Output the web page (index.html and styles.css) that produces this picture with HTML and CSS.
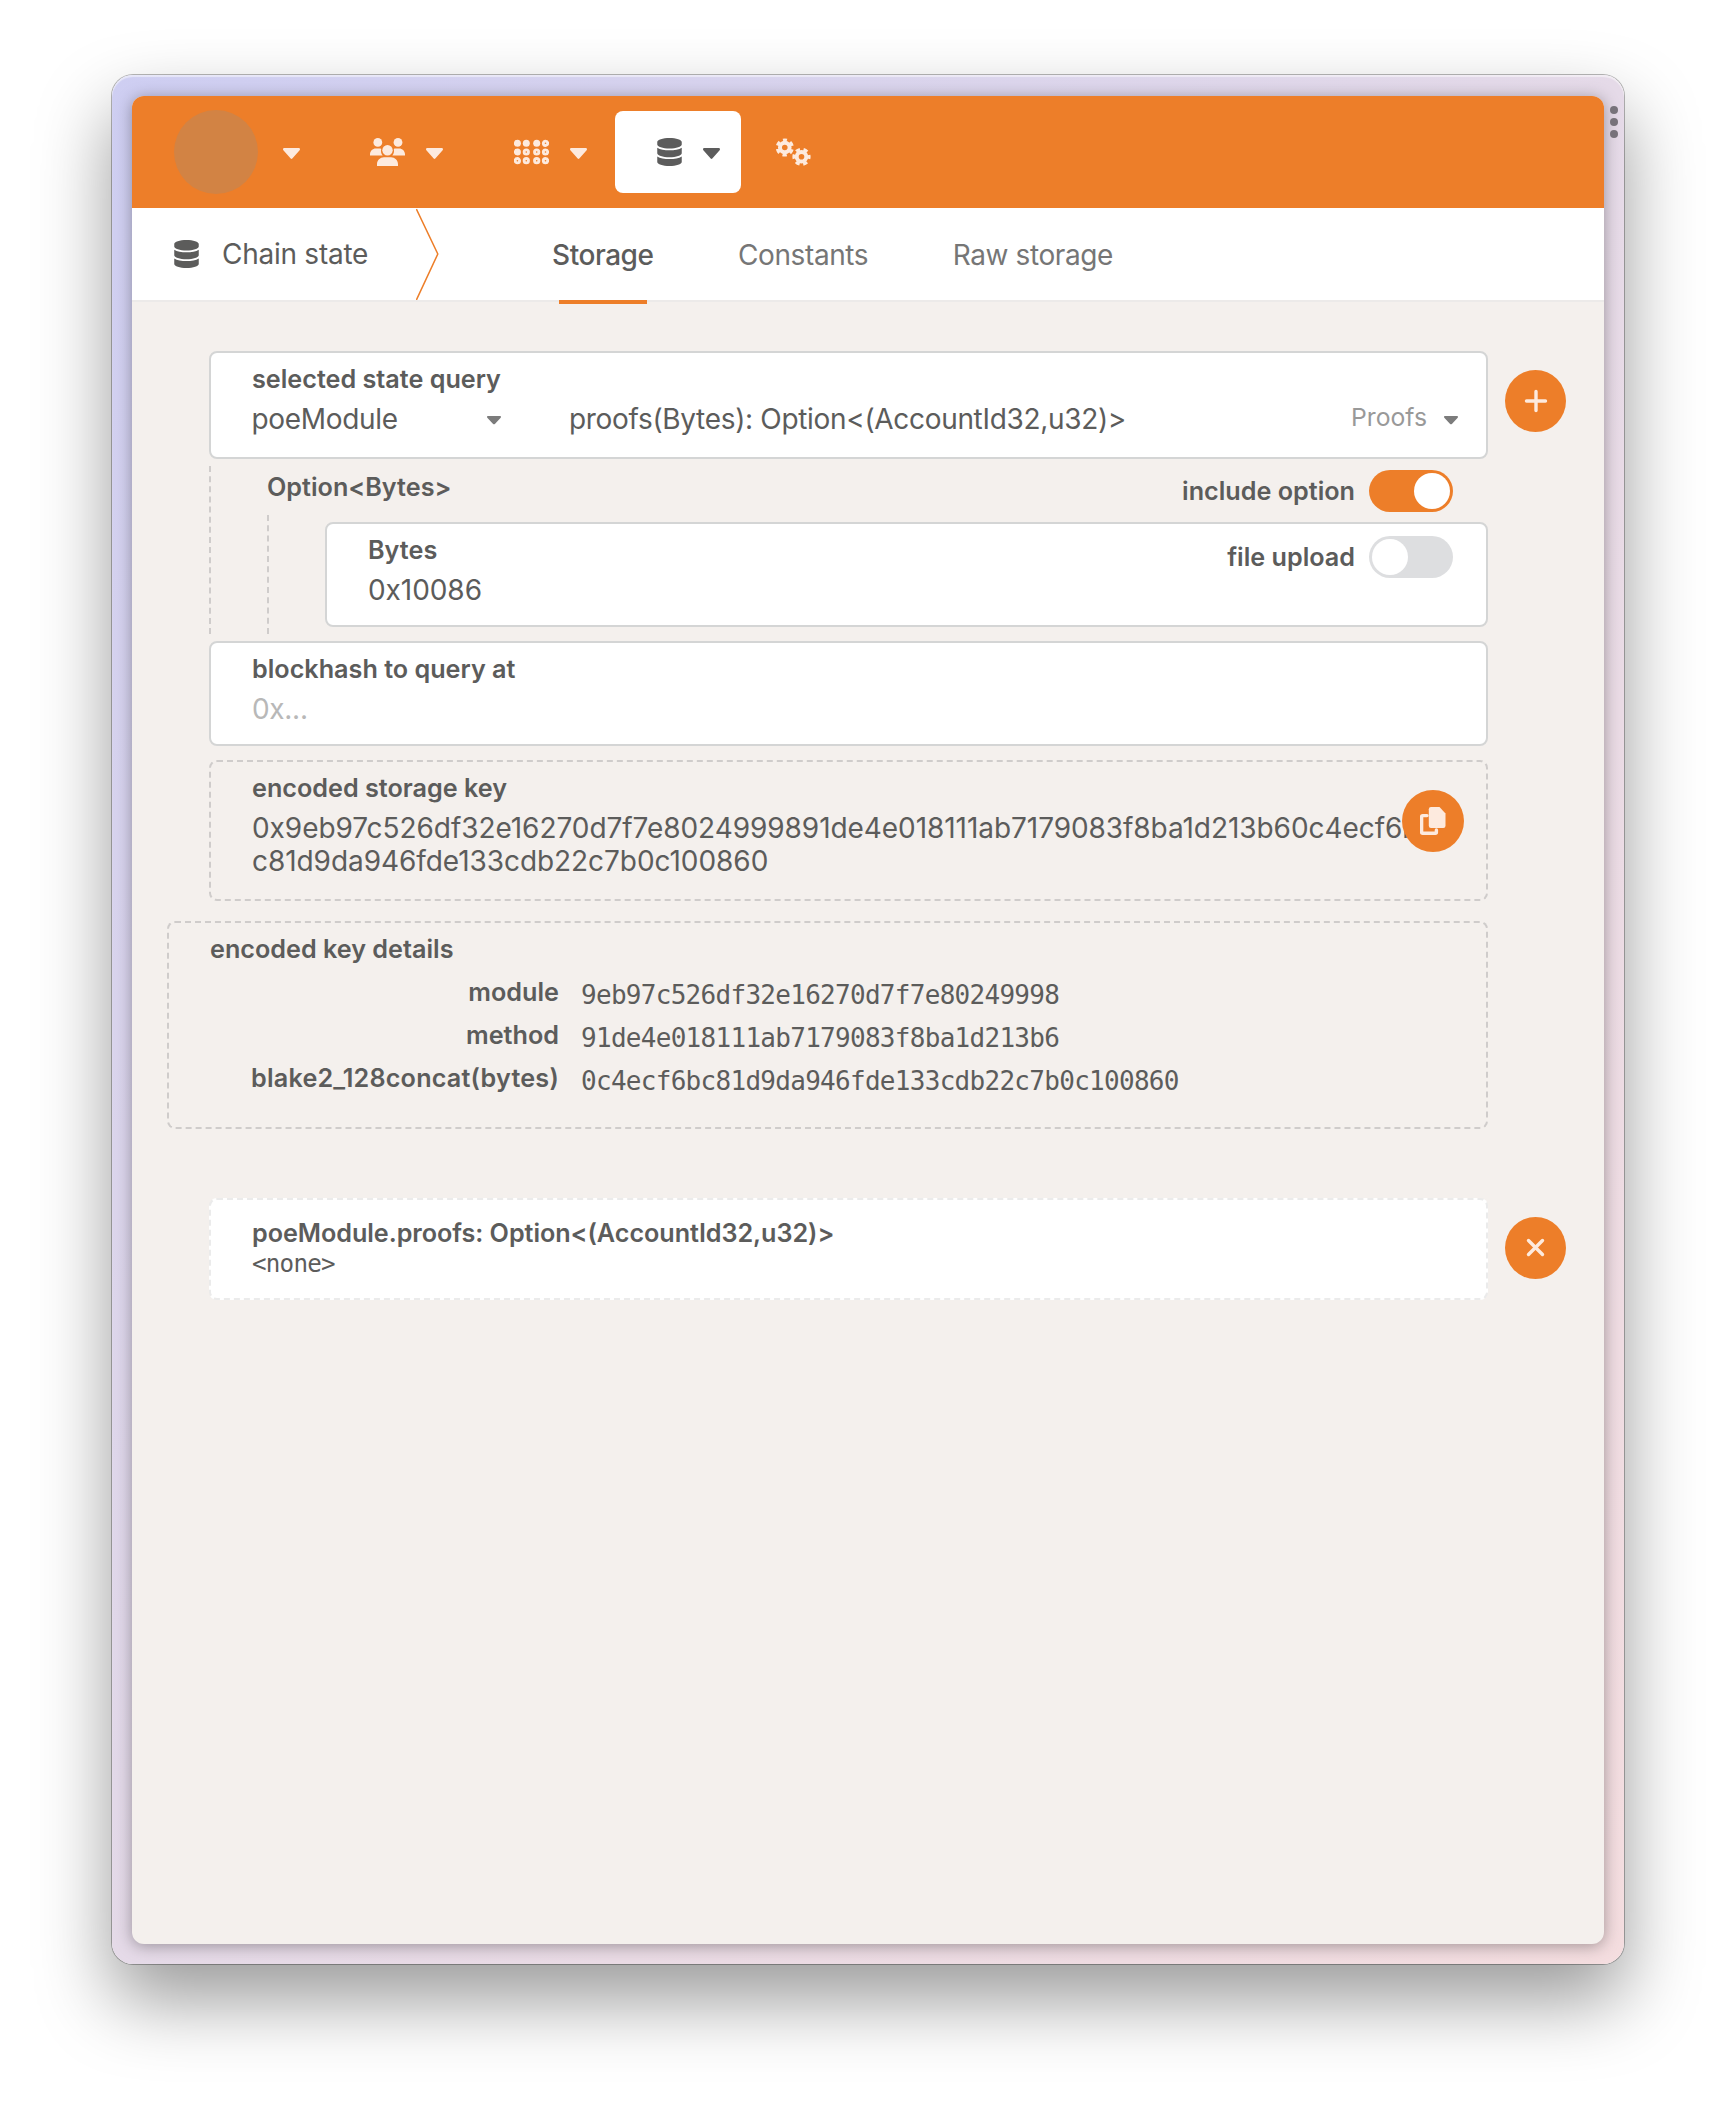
FILE: index.html
```html
<!DOCTYPE html>
<html lang="en">
<head>
<meta charset="utf-8">
<title>Chain state</title>
<link rel="stylesheet" href="styles.css">
</head>
<body>
<svg class="defs" aria-hidden="true">
  <symbol id="caret" viewBox="11 192 298 169" preserveAspectRatio="none"><path d="M31.3 192h257.3c17.8 0 26.7 21.5 14.1 34.1L174.1 354.8c-7.8 7.8-20.5 7.8-28.3 0L17.2 226.1C4.6 213.5 13.5 192 31.3 192z"/></symbol>
  <symbol id="database" viewBox="0 0 448 512"><path d="M448 73.143v45.714C448 159.143 347.667 192 224 192S0 159.143 0 118.857V73.143C0 32.857 100.333 0 224 0s224 32.857 224 73.143zM448 176v102.857C448 319.143 347.667 352 224 352S0 319.143 0 278.857V176c48.125 33.143 136.208 48.572 224 48.572S399.874 209.143 448 176zm0 160v102.857C448 479.143 347.667 512 224 512S0 479.143 0 438.857V336c48.125 33.143 136.208 48.572 224 48.572S399.874 369.143 448 336z"/></symbol>
</svg>
<div class="window">
  <div class="page">
    <header class="topbar">
      <div class="menu">
        <span class="logo"></span>
        <svg class="caret" width="17" height="11"><use href="#caret"/></svg>
      </div>
      <div class="menu">
        <svg width="35" height="28" viewBox="0 0 35 28">
          <circle cx="7.8" cy="4.4" r="4.4"/><circle cx="28" cy="4.4" r="4.4"/><circle cx="17.5" cy="12.2" r="5.2"/>
          <path d="M0 17.5v-1.2C0 12.800 2.800 10.500 5.800 10.500h3.700c.6 0 1.200.1 1.700.4-.6 2.700.1 5 1.500 6.600zM35 17.500v-1.200c0-3.500-2.800-5.800-5.800-5.800h-3.700c-.6 0-1.200.1-1.700.4.6 2.700-.1 5-1.500 6.600zM7 28v-1.800C7 22.200 10.200 19.200 14 19.200h7c3.800 0 7 3 7 7V28z"/>
        </svg>
        <svg class="caret" width="17" height="11"><use href="#caret"/></svg>
      </div>
      <div class="menu">
        <svg width="35" height="26" viewBox="0 0 35 26">
          <g><circle cx="3.4" cy="4.300" r="3.500"/><circle cx="12.300" cy="4.300" r="3.500"/><circle cx="22.700" cy="4.300" r="3.500"/><circle cx="3.400" cy="13" r="3.500"/></g>
          <g class="rings"><circle cx="31.500" cy="4.300" r="2.200"/><circle cx="12.300" cy="13" r="2.200"/><circle cx="22.700" cy="13" r="2.200"/><circle cx="31.500" cy="13" r="2.200"/><circle cx="3.400" cy="21.700" r="2.200"/><circle cx="12.300" cy="21.700" r="2.200"/><circle cx="22.700" cy="21.700" r="2.200"/><circle cx="31.500" cy="21.700" r="2.200"/></g>
        </svg>
        <svg class="caret" width="17" height="11"><use href="#caret"/></svg>
      </div>
      <div class="menu menu-active">
        <svg width="25" height="28"><use href="#database"/></svg>
        <svg class="caret" width="17" height="11"><use href="#caret"/></svg>
      </div>
      <div class="menu menu-last">
        <svg class="gears" width="35" height="28" viewBox="0 0 35 28">
          <g transform="translate(8.800 9.500) rotate(-90)"><circle class="hub" r="4.800"/><circle class="teeth" r="7.600"/></g>
          <g transform="translate(25.500 18.800)"><circle class="hub" r="4.800"/><circle class="teeth" r="7.600"/></g>
        </svg>
      </div>
    </header>

    <nav class="subnav">
      <div class="title"><svg width="25" height="28"><use href="#database"/></svg><span>Chain state</span></div>
      <svg class="divider" width="24" height="92" viewBox="0 0 24 92"><path d="M.4 1 21.800 46 .4 92"/></svg>
      <div class="tabs">
        <a class="tab tab-active">Storage</a>
        <a class="tab">Constants</a>
        <a class="tab">Raw storage</a>
      </div>
    </nav>

    <main>
      <section class="row">
        <div class="column">
          <div class="box">
            <div class="label">selected state query</div>
            <div class="selects">
              <div class="select-module"><span>poeModule</span><svg class="arrow" width="14" height="8.500"><use href="#caret"/></svg></div>
              <div class="select-method"><span>proofs(Bytes): Option&lt;(AccountId32,u32)&gt;</span><span class="hint">Proofs</span><svg class="arrow" width="14" height="8.500"><use href="#caret"/></svg></div>
            </div>
          </div>

          <div class="params">
            <div class="params-head">
              <div class="label">Option&lt;Bytes&gt;</div>
              <div class="switch"><span class="label">include option</span><span class="toggle toggle-on"></span></div>
            </div>
            <div class="params-nested">
              <div class="box box-split">
                <div>
                  <div class="label">Bytes</div>
                  <div class="value hex">0x10086</div>
                </div>
                <div class="switch"><span class="label">file upload</span><span class="toggle"></span></div>
              </div>
            </div>
          </div>

          <div class="box box-short">
            <div class="label">blockhash to query at</div>
            <div class="value placeholder">0x...</div>
          </div>

          <div class="box box-static">
            <div class="label">encoded storage key</div>
            <div class="value hex">0x9eb97c526df32e16270d7f7e8024999891de4e018111ab7179083f8ba1d213b60c4ecf6b<br>c81d9da946fde133cdb22c7b0c100860</div>
            <button class="round copy" aria-label="copy">
              <svg width="26" height="28" viewBox="0 0 26 28"><path d="M11 0h8.500L25.500 6.500V18.800a2.200 2.200 0 0 1-2.200 2.200H11a2.200 2.200 0 0 1-2.200-2.200V2.200A2.200 2.200 0 0 1 11 0z"/><path class="line" d="M7 8.600H2.600a1 1 0 0 0-1 1V25.300a1 1 0 0 0 1 1H15.400a1 1 0 0 0 1-1V23"/></svg>
            </button>
          </div>

          <div class="box box-details">
            <div class="label">encoded key details</div>
            <div class="details">
              <span class="label">module</span><code>9eb97c526df32e16270d7f7e80249998</code>
              <span class="label">method</span><code>91de4e018111ab7179083f8ba1d213b6</code>
              <span class="label hasher">blake2_128concat(bytes)</span><code>0c4ecf6bc81d9da946fde133cdb22c7b0c100860</code>
            </div>
          </div>
        </div>
        <button class="round" aria-label="add"><svg class="line" width="24" height="24" viewBox="0 0 24 24"><path d="M12 2.500v19M2.500 12h19"/></svg></button>
      </section>

      <section class="row results">
        <div class="box box-result">
          <div class="label">poeModule.proofs: Option&lt;(AccountId32,u32)&gt;</div>
          <code>&lt;none&gt;</code>
        </div>
        <button class="round" aria-label="remove"><svg class="line" width="24" height="24" viewBox="0 0 24 24"><path d="M4.500 4.500l14 14M18.500 4.500 4.500 18.500"/></svg></button>
      </section>
    </main>
  </div>
  <div class="gutter"><i></i><i></i><i></i></div>
</div>
</body>
</html>
```
FILE: styles.css
```css
* { box-sizing: border-box; }

body {
  margin: 0;
  padding: 75px 112px 0;
  height: 2112px;
  overflow: hidden;
  background: #fff;
  color: #5c5c5b;
  font: 400 28px/33px Inter, "Liberation Sans", sans-serif;
}

svg { display: block; flex: none; fill: currentColor; }
.defs { position: absolute; width: 0; height: 0; }

.window {
  display: flex;
  width: 1512px;
  height: 1889px;
  padding: 21px 0 20px 20px;
  border-radius: 21px;
  background: linear-gradient(to bottom right, #cecef2, #e5dae8 50%, #f4dddf);
  box-shadow: 0 0 0 1px rgba(0, 0, 0, .28), inset 0 2px 1px rgba(255, 255, 255, .5), 0 36px 74px rgba(0, 0, 0, .4);
}

.page {
  width: 1472px;
  border-radius: 12px;
  overflow: hidden;
  background: #f4f0ed;
  box-shadow: 0 2px 16px rgba(0, 0, 0, .34);
}

.gutter {
  display: flex;
  flex-direction: column;
  align-items: center;
  gap: 4px;
  width: 20px;
  padding-top: 10px;
}
.gutter i { width: 8px; height: 8px; border-radius: 50%; background: #77727a; }

/* top menu */
.topbar {
  display: flex;
  align-items: center;
  gap: 7.4px;
  height: 112px;
  background: #ed7e29;
  color: #fdeade;
}
.menu {
  display: flex;
  align-items: center;
  gap: 21px;
  height: 82px;
  padding: 0 21px 0 42px;
}
.menu .caret { margin-top: 3px; }
.menu-active { border-radius: 8px; background: #fff; color: #5c5c5c; }
.menu-last { padding-left: 27px; }
.logo { width: 84px; height: 84px; margin-right: 4px; border-radius: 50%; background: #d28344; }
.rings { fill: none; stroke: currentColor; stroke-width: 2.8; }
.gears { fill: none; stroke: currentColor; }
.hub { stroke-width: 4; }
.teeth { stroke-width: 3; stroke-dasharray: 4.3 3.659; stroke-dashoffset: 2.15; }

/* section bar */
.subnav {
  display: flex;
  height: 94px;
  border-bottom: 2px solid #eceae9;
  background: #fff;
}
.title {
  display: flex;
  align-items: center;
  gap: 23px;
  width: 284px;
  padding-left: 42px;
  letter-spacing: -.26px;
}
.divider { fill: none; stroke: #ed7e29; stroke-width: 1.5; }
.tabs { display: flex; gap: 84.5px; padding: 2px 0 0 112px; }
.tab { position: relative; line-height: 90px; letter-spacing: -.4px; color: #767676; }
.tab-active { font-weight: 500; letter-spacing: -.45px; color: #5c5c5b; }
.tab-active::after {
  content: "";
  position: absolute;
  left: 7px;
  right: 7px;
  bottom: -4px;
  height: 4px;
  background: #ed7e29;
}

/* content */
main { padding: 49px 38px 0 77px; }
.row { display: flex; justify-content: space-between; align-items: flex-start; }
.column { width: 1279px; }
.results { margin-top: 69px; }

.box {
  position: relative;
  height: 108px;
  padding: 11px 33px 0 41px;
  border: 2px solid #d4d5d5;
  border-radius: 8px;
  background: #fff;
}
.label { font-size: 25.2px; font-weight: 600; line-height: 30px; white-space: nowrap; }
.value { margin-top: 9px; letter-spacing: -.3px; white-space: nowrap; }
.hex { letter-spacing: -.06px; }
.placeholder { color: #b8b8b8; }

.selects { display: flex; margin-top: 9px; letter-spacing: -.32px; }
.select-module, .select-method { display: flex; align-items: center; }
.select-module { width: 249px; justify-content: space-between; }
.select-module > span { margin-left: -.5px; }
.select-method { flex: 1; margin-left: 67px; margin-right: -5px; }
.select-method > span:first-child { margin-left: 1px; }
.arrow { margin-top: 2px; color: #7c7c7c; }
.hint { margin: -4px 17px 0 auto; font-size: 24.75px; letter-spacing: 0; color: #999; }

.params { margin: 7px 0; border-left: 2px dashed #cfcccb; }
.params-head {
  display: flex;
  justify-content: space-between;
  height: 49px;
  padding: 4px 35px 0 56px;
}
.params-head > .label { margin-top: 2px; }
.params-nested {
  margin-left: 56px;
  padding: 7px 0 7px 56px;
  border-left: 2px dashed #cfcccb;
}
.box-split { display: flex; justify-content: space-between; height: 105px; }
.box-split .switch { margin-top: 1px; }

.switch { display: flex; align-items: center; gap: 14px; height: 42px; }
.toggle {
  display: flex;
  width: 84px;
  height: 42px;
  padding: 3px;
  border-radius: 21px;
  background: #dddee0;
}
.toggle::before { content: ""; width: 36px; height: 36px; border-radius: 50%; background: #fff; }
.toggle-on { justify-content: flex-end; background: #ed7e29; }

.box-short { height: 105px; }
.box-static, .box-details { border: 2px dashed #cfcccb; background: none; }
.box-static { height: 141px; margin-top: 14px; }
.box-details { height: 208px; margin: 20px 0 0 -42px; }
.details {
  display: grid;
  grid-template-columns: 349px auto;
  grid-auto-rows: 43px;
  column-gap: 22px;
  margin-top: 7px;
}
.details .label { line-height: 43px; text-align: right; }
.details .hasher { letter-spacing: .2px; }
code { font-family: "DejaVu Sans Mono", monospace; }
.details code { padding-top: 3px; font-size: 26px; line-height: 43px; letter-spacing: -.71px; }

.box-result { width: 1279px; height: 102px; padding-top: 18px; border: 2px dashed #ebebeb; }
.box-result .label { letter-spacing: -.05px; }
.box-result code { display: block; margin-top: 2px; font-size: 24.2px; line-height: 28px; letter-spacing: -.75px; }

.round {
  display: flex;
  align-items: center;
  justify-content: center;
  width: 61px;
  height: 62px;
  margin: 19px 0 0;
  padding: 0;
  border: 0;
  border-radius: 50%;
  background: #ed7e29;
  color: #fdeade;
}
.line { fill: none; stroke: currentColor; stroke-width: 3.4; stroke-linecap: round; }
.copy { position: absolute; top: 28px; right: 22px; width: 62px; margin: 0; }
```
